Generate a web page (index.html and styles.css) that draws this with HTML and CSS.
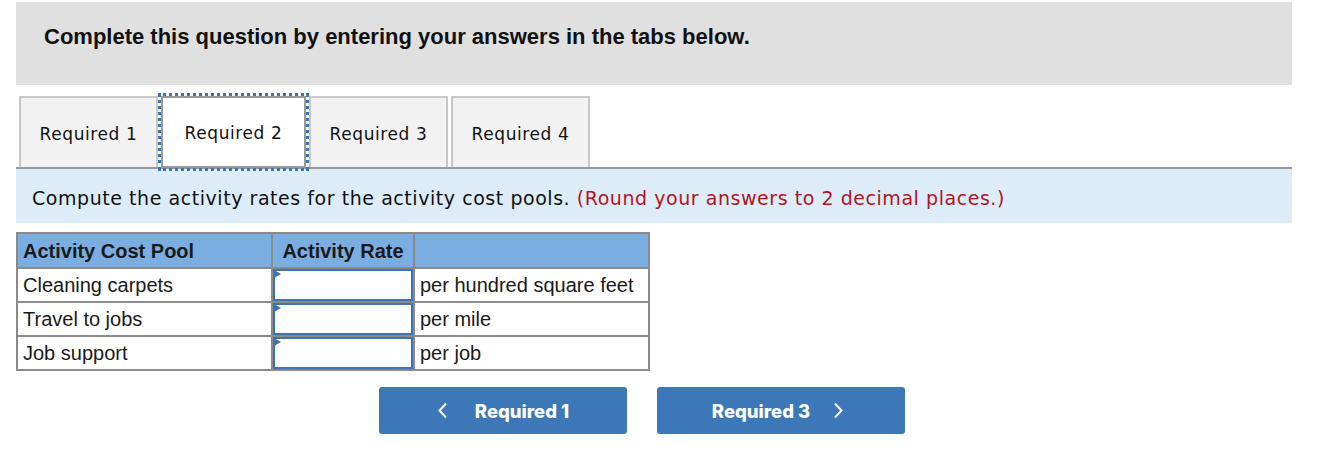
FILE: index.html
```html
<!DOCTYPE html>
<html>
<head>
<meta charset="utf-8">
<link rel="stylesheet" href="styles.css">
</head>
<body>
<div class="page">
  <div class="header">Complete this question by entering your answers in the tabs below.</div>
  <div class="tabs">
    <div class="tab t1">Required 1</div>
    <div class="tab t2 active">Required 2</div>
    <div class="tab t3">Required 3</div>
    <div class="tab t4">Required 4</div>
  </div>
  <div class="instr">Compute the activity rates for the activity cost pools.&nbsp;<span class="red">(Round your answers to 2 decimal places.)</span></div>
  <table class="grid">
    <tr class="head">
      <th class="c1">Activity Cost Pool</th>
      <th class="c2">Activity Rate</th>
      <th class="c3"></th>
    </tr>
    <tr>
      <td class="c1">Cleaning carpets</td>
      <td class="c2"><div class="inp"><span class="tri"></span></div></td>
      <td class="c3">per hundred square feet</td>
    </tr>
    <tr>
      <td class="c1">Travel to jobs</td>
      <td class="c2"><div class="inp"><span class="tri"></span></div></td>
      <td class="c3">per mile</td>
    </tr>
    <tr>
      <td class="c1">Job support</td>
      <td class="c2"><div class="inp"><span class="tri"></span></div></td>
      <td class="c3">per job</td>
    </tr>
  </table>
  <div class="nav">
    <div class="btn prev"><svg width="11" height="17" viewBox="0 0 11 17"><path d="M9 1.5 L2.5 8.5 L9 15.5" fill="none" stroke="#fff" stroke-width="2"/></svg><span>Required 1</span></div>
    <div class="btn next"><span>Required 3</span><svg width="11" height="17" viewBox="0 0 11 17"><path d="M2 1.5 L8.5 8.5 L2 15.5" fill="none" stroke="#fff" stroke-width="2"/></svg></div>
  </div>
</div>
</body>
</html>
```
FILE: styles.css
```css
* { box-sizing: border-box; }
body { margin: 0; background: #fff; }
.page { width: 1292px; padding: 2px 0 0 16px; }
.header {
  background: #e0e0e0;
  height: 83px;
  padding: 22px 0 0 28px;
  font-family: "Liberation Sans", Arial, sans-serif;
  font-weight: bold;
  font-size: 22px;
  color: #111;
}
.tabs {
  display: flex;
  margin-top: 11px;
  padding-left: 3px;
  gap: 3px;
  border-bottom: 2px solid #999;
  height: 73px;
  align-items: flex-end;
}
.tab {
  height: 71px;
  background: #f2f2f2;
  border: 2px solid #c8c8c8;
  border-bottom: none;
  display: flex;
  align-items: center;
  justify-content: center;
  padding-top: 2px;
  font-family: "DejaVu Sans", Verdana, sans-serif;
  font-size: 17px;
  letter-spacing: 0.6px;
  color: #111;
}
.t1 { width: 139px; }
.t2 { width: 145px; }
.t3 { width: 139px; }
.t4 { width: 139px; }
.tab.active {
  background: #fff;
  border: 2px solid #999;
  outline: 3px dotted #3b74ba;
  outline-offset: 0;
  position: relative;
  height: 72px;
  margin-bottom: -1px;
}
.instr {
  background: #dcecf8;
  height: 54px;
  display: flex;
  align-items: center;
  padding: 3px 0 0 16px;
  font-family: "DejaVu Sans", Verdana, sans-serif;
  font-size: 19px;
  letter-spacing: 0.55px;
  color: #111;
}
.red { color: #b3141e; }
.grid {
  margin-top: 9px;
  border-collapse: collapse;
  font-family: "Liberation Sans", Arial, sans-serif;
  font-size: 20px;
  line-height: 22px;
  color: #1a1a1a;
}
.grid th, .grid td {
  border: 2px solid #8a8a8a;
  padding: 0 5px;
  height: 34px;
  text-align: left;
  font-weight: normal;
}
.grid .head th { background: #7aaee3; font-weight: bold; height: 35px; }
.grid .head th.c2 { text-align: center; }
.c1 { width: 255px; }
.c2 { width: 142px; }
.c3 { width: 235px; }
.grid td.c2 { padding: 0; }
.inp {
  height: 32px;
  border: 2px solid #3d72b4;
  background: #fff;
  position: relative;
}
.tri {
  position: absolute;
  left: -1px;
  top: -1px;
  width: 0;
  height: 0;
  border-top: 4px solid transparent;
  border-bottom: 4px solid transparent;
  border-left: 7px solid #3d72b4;
}
.nav {
  display: flex;
  gap: 30px;
  margin: 16px 0 0 363px;
}
.btn {
  width: 248px;
  height: 47px;
  background: #3c77b8;
  border-radius: 3px;
  display: flex;
  align-items: center;
  justify-content: center;
  gap: 27px;
  color: #fff;
  font-family: Inter, Roboto, sans-serif;
  font-weight: 800;
  font-size: 18.5px;
}
.btn.next { gap: 23px; padding-right: 6px; }
```
